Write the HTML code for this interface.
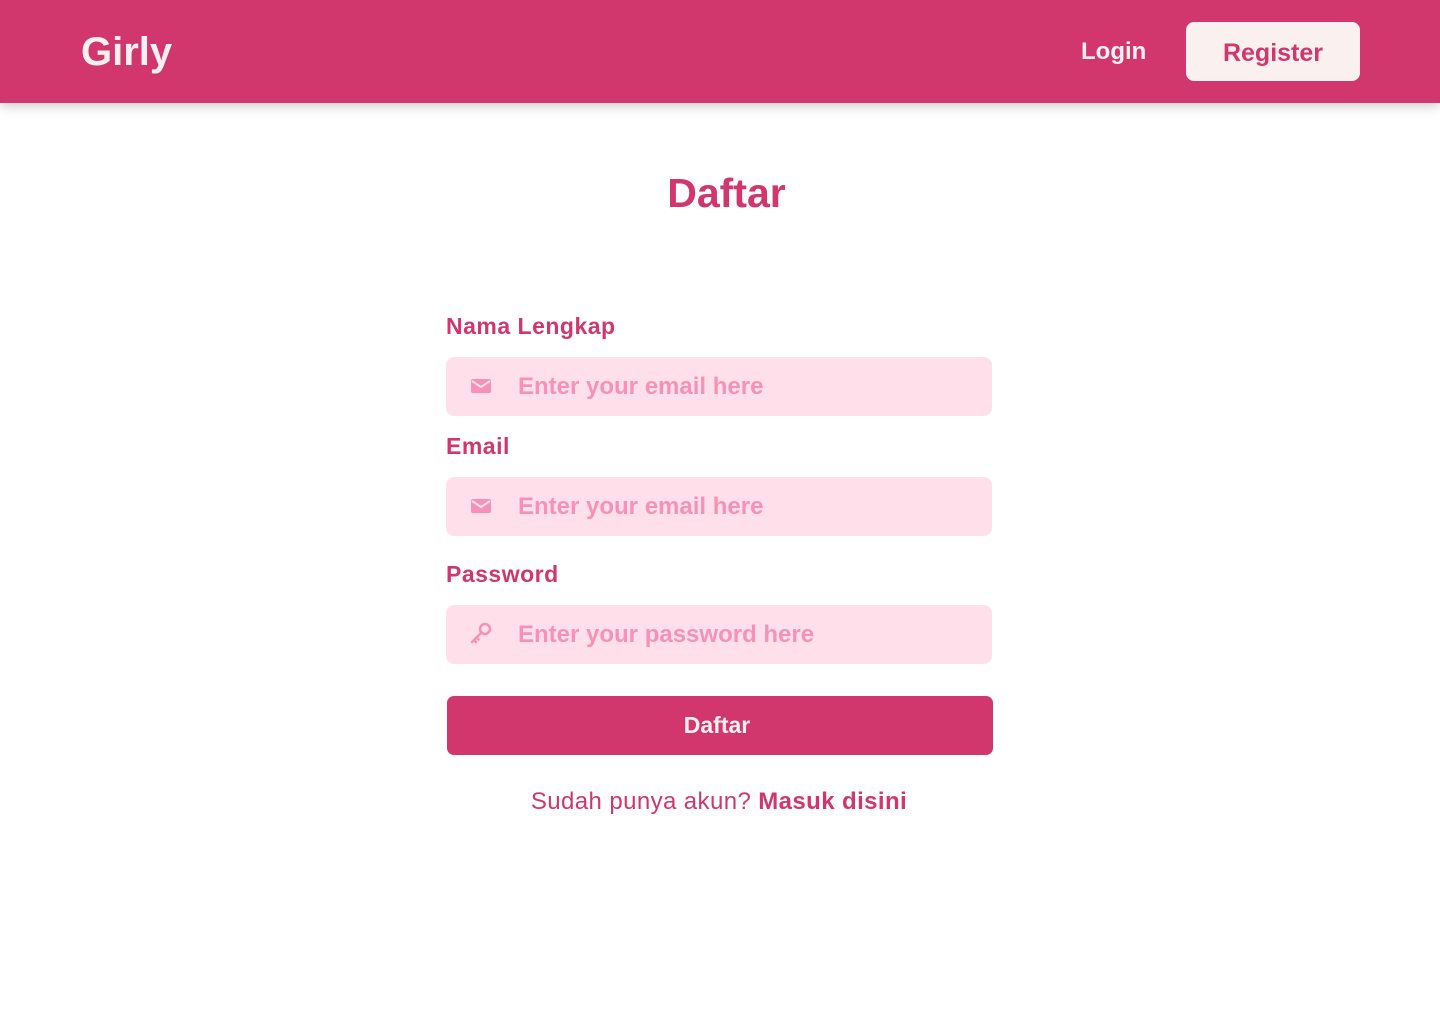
<!DOCTYPE html>
<html><head><meta charset="utf-8"><style>
*{margin:0;padding:0;box-sizing:border-box}
body{width:1440px;height:1024px;background:#fff;font-family:"Liberation Sans",sans-serif;position:relative;overflow:hidden}
.hdr{position:absolute;left:0;top:0;width:1440px;height:103px;background:#D1376D;box-shadow:0 4px 10px rgba(0,0,0,.18)}
.logo{position:absolute;left:81px;top:30px;font-size:40px;font-weight:bold;color:#FAF0F0}
.login{position:absolute;left:1081px;top:38px;font-size:24px;font-weight:bold;color:#FAF0F0}
.reg{position:absolute;left:1186px;top:22px;width:174px;height:59px;background:#FAF0F0;border-radius:8px;color:#D1376D;font-size:25px;font-weight:bold;text-align:center;line-height:63px}
h1{position:absolute;left:0;width:1453px;text-align:center;top:170px;font-size:41px;color:#D1376D}
.lbl{position:absolute;left:446px;font-size:23px;letter-spacing:.5px;font-weight:bold;color:#D1376D}
.inp{position:absolute;left:446px;width:546px;height:59px;background:#FFE0EA;border-radius:8px}
.inp span{position:absolute;left:72px;top:16px;font-size:24px;font-weight:bold;color:#F592B6}
.inp svg{position:absolute;left:24px;top:18px}
.btn{position:absolute;left:447px;top:696px;width:546px;height:59px;background:#D1376D;border-radius:7px;color:#FAF0F0;font-size:23px;font-weight:bold;text-align:center;line-height:59px;padding-right:6px}
.foot{position:absolute;left:0;width:1438px;text-align:center;top:788px;font-size:24px;letter-spacing:.4px;color:#D1376D}
</style></head><body>
<div class="hdr"><div class="logo">Girly</div><div class="login">Login</div><div class="reg">Register</div></div>
<h1>Daftar</h1>
<div class="lbl" style="top:313px">Nama Lengkap</div>
<div class="inp" style="top:357px"><svg width="22" height="22" viewBox="0 0 22 22"><rect x="1" y="4" width="20" height="14" rx="2" fill="#F592B6"/><path d="M2 6l9 6 9-6" stroke="#FFE0EA" stroke-width="2" fill="none"/></svg><span>Enter your email here</span></div>
<div class="lbl" style="top:433px">Email</div>
<div class="inp" style="top:477px"><svg width="22" height="22" viewBox="0 0 22 22"><rect x="1" y="4" width="20" height="14" rx="2" fill="#F592B6"/><path d="M2 6l9 6 9-6" stroke="#FFE0EA" stroke-width="2" fill="none"/></svg><span>Enter your email here</span></div>
<div class="lbl" style="top:561px">Password</div>
<div class="inp" style="top:605px"><svg width="24" height="24" viewBox="0 0 24 24" style="top:16px"><circle cx="15" cy="8" r="5" stroke="#F592B6" stroke-width="2.5" fill="none"/><path d="M11.5 11.5L2 21M4 19l2 2M6.5 16.5l2 2" stroke="#F592B6" stroke-width="2.5" fill="none" stroke-linecap="round"/></svg><span>Enter your password here</span></div>
<div class="btn">Daftar</div>
<div class="foot">Sudah punya akun? <b>Masuk disini</b></div>
</body></html>
